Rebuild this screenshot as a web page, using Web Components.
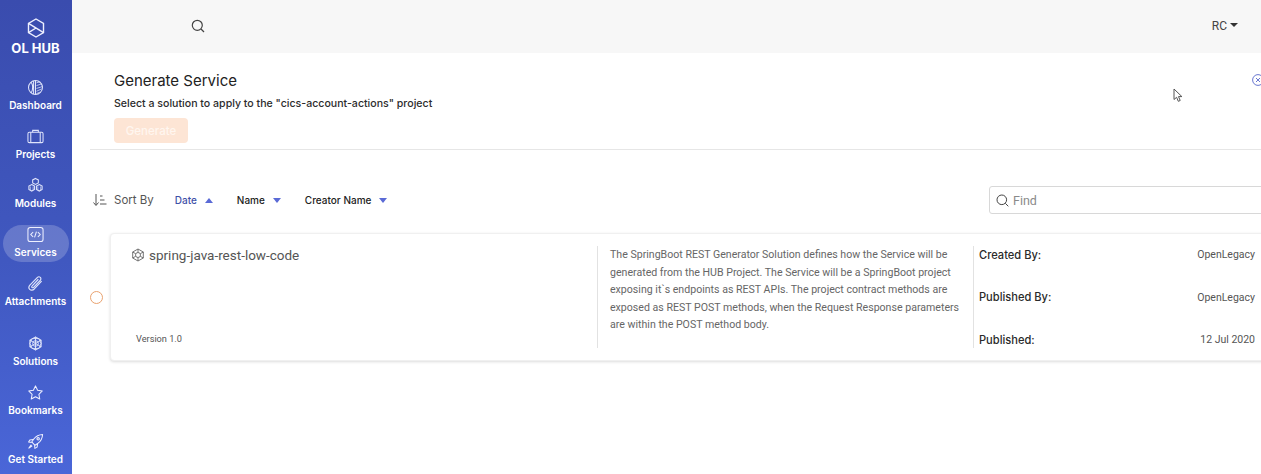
<!DOCTYPE html>
<html>
<head>
<meta charset="utf-8">
<title>OL HUB</title>
<style>
    html, body { margin: 0; height: 100%; background: #fff; overflow: hidden; }
    body { font-family: "Inter", "Liberation Sans", sans-serif; }
</style>
</head>
<body>
<hub-app>
    <hub-sidebar slot="side">
        <nav-item label="Dashboard"><svg viewBox="0 0 18 18" fill="none" stroke="#dfe4fb" stroke-width="1.1"><circle cx="9" cy="9" r="7.4"/><path d="M9 1.600V16.400M7 2v14M4.600 3.400c1.600 3 1.600 8 0 11.200"/><path d="M10 4l4-1M10 7l6-2M10 10l6.300-2M10 13l5.500-2.500M10 15.500l3.500-1.500" stroke-width=".8"/></svg></nav-item>
        <nav-item label="Projects"><svg viewBox="0 0 18 18" fill="none" stroke="#dfe4fb" stroke-width="1.1"><rect x="1" y="4.500" width="16" height="11" rx="1.500"/><path d="M6 4.500V2.500h6v2M4 4.500v11M14 4.500v11"/></svg></nav-item>
        <nav-item label="Modules"><svg viewBox="0 0 18 18" fill="none" stroke="#dfe4fb" stroke-width="1.100"><path d="M9 1.500l3 1.600v3.200l-3 1.600-3-1.600V3.100zM5 8l3 1.600v3.600l-3 1.700-3-1.700V9.600zM13 8l3 1.600v3.600l-3 1.700-3-1.700V9.600z"/><path d="M3.500 10v4M6.500 10v4M11.500 10v4M14.500 10v4" stroke-width=".7"/></svg></nav-item>
        <nav-item label="Services" active><svg viewBox="0 0 18 18" fill="none" stroke="#eef0ff" stroke-width="1.100"><rect x="1" y="1.500" width="16" height="15" rx="2.500"/><path d="M6.500 6.500L4 9l2.500 2.500M11.500 6.500L14 9l-2.500 2.500M10 6l-2 6"/></svg></nav-item>
        <nav-item label="Attachments"><svg viewBox="0 0 18 18" fill="none" stroke="#dfe4fb" stroke-width="1.200"><path d="M15.500 6.500l-7.800 8.300c-1.500 1.500-3.600 1.600-4.800.4s-1-3.300.4-4.800L10.800 2.800c1-1 2.400-1.100 3.300-.3s.8 2.300-.2 3.300L7 13c-.5.500-1.200.6-1.700.2s-.3-1.200.2-1.700l6.500-7"/></svg></nav-item>
        <nav-item label="Solutions" class="gap"><svg viewBox="0 0 18 18" fill="none" stroke="#dfe4fb" stroke-width="1"><path d="M9 2l6 3.400v7.200L9 16l-6-3.400V5.400z"/><path d="M9 2v14M3 5.400l12 7.200M15 5.400L3 12.600M5.500 3.800L3 9l2.500 5.200h7L15 9l-2.500-5.200z"/><circle cx="9" cy="9" r="3"/></svg></nav-item>
        <nav-item label="Bookmarks"><svg viewBox="0 0 18 18" fill="none" stroke="#eef0ff" stroke-width="1.100" stroke-linejoin="round"><path d="M9 2l2.200 4.700 5 .7-3.600 3.500.9 5L9 13.500 4.500 15.900l.9-5L1.800 7.400l5-.7z"/></svg></nav-item>
        <nav-item label="Get Started"><svg viewBox="0 0 18 18" fill="none" stroke="#eef0ff" stroke-width="1.100" stroke-linejoin="round"><path d="M16.500 1.500c-4 .2-7 1.800-9.300 4.800L5 9.500 8.500 13l3.200-2.200c3-2.300 4.600-5.300 4.800-9.300z"/><circle cx="11.800" cy="6.200" r="1.300"/><path d="M6.700 6.800L3 7.300 1.700 9.600l3.300.4M11.200 11.300L10.700 15l-2.300 1.300-.4-3.300M4.500 12.500l-2.500 3.500 3.500-2.500"/></svg></nav-item>
    </hub-sidebar>
    <top-bar slot="top" user="RC"></top-bar>
    <generate-head title="Generate Service" project="cics-account-actions"></generate-head>
    <sort-bar></sort-bar>
    <solution-card name="spring-java-rest-low-code" version="Version 1.0">
        The SpringBoot REST Generator Solution defines how the Service will be generated from the HUB Project. The Service will be a SpringBoot project exposing it`s endpoints as REST APIs. The project contract methods are exposed as REST POST methods, when the Request Response parameters are within the POST method body.
    </solution-card>
</hub-app>

<script>
class HubApp extends HTMLElement {
    constructor(){
        super();
        this.attachShadow({mode: 'open'});
        this.shadowRoot.innerHTML = `
            <style>
                :host {
                    display: grid;
                    grid-template-columns: 72px 1fr;
                    grid-template-rows: 53px 1fr;
                    width: 1261px;
                    height: 474px;
                    overflow: hidden;
                }
                #side { grid-row: 1 / 3; }
                #content {
                    min-width: 0;
                    overflow: hidden;
                    position: relative;
                }
                #inner { width: 1240px; }
                #cursor {
                    position: absolute;
                    left: 1101px;
                    top: 35px;
                    width: 11px;
                    height: 15px;
                }
            </style>
            <div id="side"><slot name="side"></slot></div>
            <div><slot name="top"></slot></div>
            <div id="content">
                <div id="inner"><slot></slot></div>
                <svg id="cursor" viewBox="0 0 11 15" fill="#fff" stroke="#555" stroke-width="1"><path d="M1 1v10.500l2.600-2.200 1.700 4 1.900-.8-1.700-3.900h3.400z"/></svg>
            </div>
        `;
    }
}

class HubSidebar extends HTMLElement {
    constructor(){
        super();
        this.attachShadow({mode: 'open'});
        this.shadowRoot.innerHTML = `
            <style>
                :host {
                    display: flex;
                    flex-direction: column;
                    height: 474px;
                    background: linear-gradient(180deg, #3a4cae 0%, #4058c0 55%, #4a66d8 100%);
                    color: #fff;
                    font-family: "Inter", "Liberation Sans", sans-serif;
                    box-sizing: border-box;
                }
                #logo {
                    display: flex;
                    flex-direction: column;
                    align-items: center;
                    box-sizing: border-box;
                    flex: none;
                    padding: 18px 1px 0 0;
                    height: 71px;
                    font-size: 13px;
                    font-weight: 700;
                    line-height: 17px;
                }
                #logo svg { width: 18px; height: 20px; margin-bottom: 2px; }
            </style>
            <div id="logo">
                <svg viewBox="0 0 18 20" fill="none" stroke="#eef0ff" stroke-width="1.400"><path d="M9 1l7.500 4.300v9.400L9 19l-7.500-4.300V5.300z"/><path d="M1.500 5.300L16.500 14.700M1.500 14.700l7.500-4.700"/></svg>
                <span>OL HUB</span>
            </div>
            <slot></slot>
        `;
    }
}

class NavItem extends HTMLElement {
    constructor(){
        super();
        this.attachShadow({mode: 'open'});
        this.shadowRoot.innerHTML = `
            <style>
                :host {
                    display: flex;
                    flex-direction: column;
                    align-items: center;
                    flex: none;
                    height: 49px;
                    box-sizing: border-box;
                    padding: 8px 1px 0 0;
                    font-size: 10px;
                    font-weight: 600;
                    color: #fff;
                    position: relative;
                }
                :host(.gap) { margin-top: 11px; }
                :host([active])::before {
                    content: "";
                    position: absolute;
                    left: 3px;
                    top: 7px;
                    width: 66px;
                    height: 37px;
                    border-radius: 19px;
                    background: rgba(255,255,255,0.2);
                }
                ::slotted(svg) { width: 17px; height: 17px; position: relative; display: block; }
                #label { line-height: 13px; margin-top: 3px; position: relative; white-space: nowrap; }
            </style>
            <slot></slot>
            <span id="label"></span>
        `;
    }
    connectedCallback(){
        this.shadowRoot.querySelector('#label').textContent = this.getAttribute('label');
    }
}

class TopBar extends HTMLElement {
    constructor(){
        super();
        this.attachShadow({mode: 'open'});
        this.shadowRoot.innerHTML = `
            <style>
                :host {
                    display: flex;
                    align-items: center;
                    justify-content: space-between;
                    height: 53px;
                    background: #f7f7f7;
                    padding: 0 23px 2px 119px;
                    box-sizing: border-box;
                    font-family: "Roboto", "Liberation Sans", sans-serif;
                    font-size: 12px;
                    color: #444;
                }
                svg { width: 14px; height: 14px; display: block; }
                #user { display: flex; align-items: center; gap: 3px; }
                #caret {
                    border-left: 4px solid transparent;
                    border-right: 4px solid transparent;
                    border-top: 4px solid #333;
                    margin-bottom: 2px;
                }
            </style>
            <svg viewBox="0 0 14 14" fill="none" stroke="#444" stroke-width="1.200"><circle cx="6.300" cy="6.300" r="5"/><path d="M10 10l3 3"/></svg>
            <div id="user"><span id="name"></span><span id="caret"></span></div>
        `;
    }
    connectedCallback(){
        this.shadowRoot.querySelector('#name').textContent = this.getAttribute('user');
    }
}

class GenerateHead extends HTMLElement {
    constructor(){
        super();
        this.attachShadow({mode: 'open'});
        this.shadowRoot.innerHTML = `
            <style>
                :host {
                    display: block;
                    margin-left: 18px;
                    height: 97px;
                    box-sizing: border-box;
                    padding: 18px 0 0 24px;
                    border-bottom: 1px solid #e6e6e6;
                    position: relative;
                    color: #222;
                }
                h1 { margin: 0; font-size: 15px; line-height: 20px; font-weight: 400; }
                p { margin: 4px 0 0; font-size: 10.600px; font-weight: 500; line-height: 18px; color: #2c2c2c; }
                button {
                    display: block;
                    margin-top: 5px;
                    width: 74px;
                    height: 25px;
                    border: 0;
                    border-radius: 4px;
                    background: #fde5d5;
                    color: #fff6ef;
                    font-family: inherit;
                    font-size: 11.500px;
                    font-weight: 500;
                    padding: 0;
                }
                #close {
                    position: absolute;
                    left: 1162px;
                    top: 21px;
                    width: 12px;
                    height: 12px;
                }
            </style>
            <h1 id="title"></h1>
            <p id="sub"></p>
            <button disabled>Generate</button>
            <svg id="close" viewBox="0 0 12 12" fill="none" stroke="#6a78d0" stroke-width="1"><circle cx="6" cy="6" r="5.400"/><path d="M4 4l4 4M8 4l-4 4"/></svg>
        `;
    }
    connectedCallback(){
        this.shadowRoot.querySelector('#title').textContent = this.getAttribute('title');
        this.shadowRoot.querySelector('#sub').textContent =
            'Select a solution to apply to the "' + this.getAttribute('project') + '" project';
    }
}

class SortBar extends HTMLElement {
    constructor(){
        super();
        this.attachShadow({mode: 'open'});
        this.shadowRoot.innerHTML = `
            <style>
                :host {
                    display: flex;
                    align-items: center;
                    height: 28px;
                    margin: 36px 0 19px;
                    padding-left: 20px;
                    font-size: 10px;
                    font-weight: 500;
                    color: #222;
                }
                #sorticon { width: 15px; height: 14px; margin-right: 7px; }
                #by { font-size: 11.500px; font-weight: 400; color: #555; margin-right: 21px; }
                .opt { display: flex; align-items: center; gap: 8px; margin-right: 24px; white-space: nowrap; }
                .opt.on { color: #3f51a8; }
                .up, .down {
                    border-left: 4.500px solid transparent;
                    border-right: 4.500px solid transparent;
                }
                .up { border-bottom: 5px solid #5a6ad6; }
                .down { border-top: 5px solid #5a6ad6; }
                #find {
                    margin-left: auto;
                    width: 323px;
                    height: 28px;
                    box-sizing: border-box;
                    border: 1px solid #d8d8d8;
                    border-radius: 3px;
                    display: flex;
                    align-items: center;
                    gap: 4px;
                    padding-left: 6px;
                    font-family: "Roboto", "Liberation Sans", sans-serif;
                    font-size: 12.500px;
                    font-weight: 400;
                    color: #8a8a8a;
                }
                #find svg { width: 13px; height: 13px; }
            </style>
            <svg id="sorticon" viewBox="0 0 15 14" fill="none" stroke="#555" stroke-width="1"><path d="M4 1v11M1.500 9.500L4 12.500l2.500-3M8 3h2.500M8 7h4.500M8 11h6.500"/></svg>
            <span id="by">Sort By</span>
            <span class="opt on">Date <i class="up"></i></span>
            <span class="opt">Name <i class="down"></i></span>
            <span class="opt">Creator Name <i class="down"></i></span>
            <div id="find">
                <svg viewBox="0 0 13 13" fill="none" stroke="#444" stroke-width="1"><circle cx="5.800" cy="5.800" r="4.800"/><path d="M9.300 9.300l3 3"/></svg>
                <span>Find</span>
            </div>
        `;
    }
}

class SolutionCard extends HTMLElement {
    constructor(){
        super();
        this.attachShadow({mode: 'open'});
        this.shadowRoot.innerHTML = `
            <style>
                :host {
                    display: flex;
                    align-items: center;
                    padding-left: 18px;
                    font-family: "Roboto", "Liberation Sans", sans-serif;
                    color: #555;
                }
                #radio {
                    width: 13px;
                    height: 13px;
                    box-sizing: border-box;
                    border: 1.200px solid #e9a26f;
                    border-radius: 50%;
                    flex: none;
                    margin-right: 7px;
                }
                #card {
                    flex: 1;
                    height: 128px;
                    box-sizing: border-box;
                    padding: 12px 0;
                    border-radius: 4px;
                    border: 1px solid #f0f0f0;
                    box-shadow: 0 1px 3px rgba(0,0,0,0.14);
                    display: grid;
                    grid-template-columns: 487px 376px 1fr;
                    background: #fff;
                }
                #left {
                    border-right: 1px solid #e2e2e2;
                    padding-left: 20px;
                    display: flex;
                    flex-direction: column;
                    justify-content: space-between;
                }
                #name {
                    display: flex;
                    align-items: center;
                    gap: 4px;
                    font-size: 13.500px;
                    line-height: 18px;
                }
                #name svg { width: 14px; height: 14px; flex: none; }
                #version { font-size: 9.200px; line-height: 12px; padding: 0 0 3px 5px; }
                #desc {
                    padding: 0 12px 0 12px;
                    border-right: 1px solid #e2e2e2;
                    font-size: 10.600px;
                    line-height: 17.500px;
                    color: #666;
                }
                #meta {
                    width: 276px;
                    padding-left: 5px;
                    display: flex;
                    flex-direction: column;
                    justify-content: space-between;
                    font-size: 10.500px;
                    color: #555;
                }
                .row { display: flex; justify-content: space-between; height: 17px; align-items: center; }
                .row b { font-family: "Inter", "Liberation Sans", sans-serif; font-size: 11.100px; font-weight: 500; color: #2a2a2a; }
            </style>
            <div id="radio"></div>
            <div id="card">
                <div id="left">
                    <div id="name">
                        <svg viewBox="0 0 14 14" fill="none" stroke="#666" stroke-width=".9"><path d="M7 1l5.300 3v6L7 13l-5.300-3V4z"/><circle cx="7" cy="7" r="2.500"/><path d="M7 1v3.500M7 9.500V13M1.700 4l3 1.700M9.300 8.300l3 1.700M12.300 4l-3 1.700M4.700 8.300l-3 1.700"/></svg>
                        <span id="title"></span>
                    </div>
                    <div id="version"></div>
                </div>
                <div id="desc"><slot></slot></div>
                <div id="meta">
                    <div class="row"><b>Created By:</b><span>OpenLegacy</span></div>
                    <div class="row"><b>Published By:</b><span>OpenLegacy</span></div>
                    <div class="row"><b>Published:</b><span>12 Jul 2020</span></div>
                </div>
            </div>
        `;
    }
    connectedCallback(){
        this.shadowRoot.querySelector('#title').textContent = this.getAttribute('name');
        this.shadowRoot.querySelector('#version').textContent = this.getAttribute('version');
    }
}

customElements.define('hub-app', HubApp);
customElements.define('hub-sidebar', HubSidebar);
customElements.define('nav-item', NavItem);
customElements.define('top-bar', TopBar);
customElements.define('generate-head', GenerateHead);
customElements.define('sort-bar', SortBar);
customElements.define('solution-card', SolutionCard);
</script>
</body>
</html>
